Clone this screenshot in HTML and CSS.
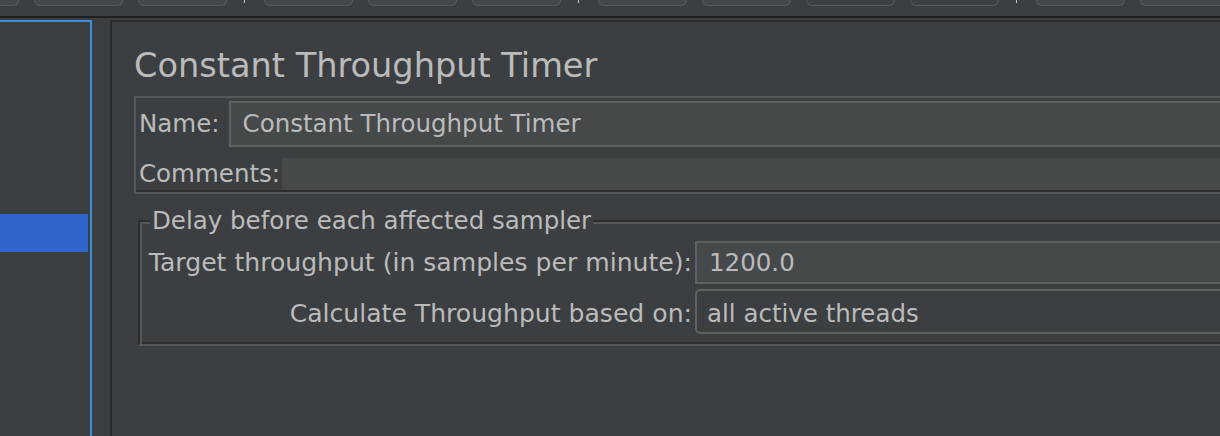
FILE: index.html
```html
<!DOCTYPE html>
<html>
<head>
<meta charset="utf-8">
<link rel="stylesheet" href="styles.css">
</head>
<body>
<div class="toolbar">
  <span class="tb-btn first"></span>
  <span class="tb-btn"></span>
  <span class="tb-btn"></span>
  <span class="tb-sep"></span>
  <span class="tb-btn"></span>
  <span class="tb-btn"></span>
  <span class="tb-btn"></span>
  <span class="tb-sep"></span>
  <span class="tb-btn"></span>
  <span class="tb-btn"></span>
  <span class="tb-btn dark"></span>
  <span class="tb-btn dark"></span>
  <span class="tb-sep"></span>
  <span class="tb-btn"></span>
  <span class="tb-btn"></span>
</div>
<div class="main">
  <div class="tree">
    <div class="tree-selected"></div>
  </div>
  <div class="content">
    <h1 class="title">Constant Throughput Timer</h1>
    <div class="etched name-panel">
      <div class="etched-inner">
        <div class="row name-row">
          <span class="label name-label">Name:</span>
          <div class="textfield name-field">Constant Throughput Timer</div>
        </div>
        <div class="row comments-row">
          <span class="label">Comments:</span>
          <div class="textarea"></div>
        </div>
      </div>
    </div>
    <fieldset class="group">
      <legend class="group-title">Delay before each affected sampler</legend>
      <div class="form-grid">
        <span class="label right">Target throughput (in samples per minute):</span>
        <div class="textfield value-field">1200.0</div>
        <span class="label right calc-label">Calculate Throughput based on:</span>
        <div class="combo">all active threads</div>
      </div>
    </fieldset>
  </div>
</div>
</body>
</html>
```

FILE: styles.css
```css
html, body {
  margin: 0;
  padding: 0;
}
body {
  width: 1220px;
  height: 436px;
  overflow: hidden;
  background: #3c3f41;
  color: #bbbbbb;
  font-family: "DejaVu Sans", "Liberation Sans", sans-serif;
  font-size: 24.5px;
}

/* toolbar */
.toolbar {
  height: 16px;
  border-bottom: 2px solid #1f2022;
  display: flex;
  align-items: flex-start;
  gap: 15px;
  overflow: hidden;
}
.tb-btn {
  flex: 0 0 89px;
  box-sizing: border-box;
  height: 6px;
  border: 1px solid #585b5e;
  border-top: none;
  border-radius: 0 0 6px 6px;
  background: #45484a;
}
.tb-btn.first { margin-left: -70px; }
.tb-btn.dark { background: #3d4043; }
.tb-sep {
  flex: 0 0 1px;
  height: 3px;
  margin: 0 4px 0 2px;
  background: #c8c8c8;
}

/* main split */
.main {
  display: flex;
  margin-top: 2px;
  height: 418px;
}
.tree {
  flex: 0 0 92px;
  box-sizing: border-box;
  border-top: 2px solid #3d8ed9;
  border-right: 2px solid #3d8ed9;
  padding-top: 192px;
  padding-right: 2px;
}
.tree-selected {
  height: 38px;
  background: #2f65ca;
}
.content {
  flex: 1;
  margin-left: 18px;
  border-top: 2px solid #2a2b2c;
  border-left: 2px solid #2a2b2c;
  padding: 24px 0 0 22px;
  overflow: hidden;
}
.title {
  margin: 0 0 10px 0;
  font-weight: normal;
  font-size: 33.6px;
  line-height: 40px;
  height: 40px;
  color: #bbbbbb;
  white-space: nowrap;
}

/* etched panel */
.etched {
  width: 1300px;
  border-top: 2px solid #55585a;
  border-left: 2px solid #55585a;
  border-bottom: 2px solid #55585a;
}
.etched-inner {
  border-bottom: 2px solid #2b2d2e;
  padding: 3px 0 0 3px;
}
.row {
  display: flex;
  align-items: center;
  white-space: nowrap;
}
.label {
  white-space: nowrap;
  line-height: 30px;
}
.name-row { height: 46px; }
.name-label { margin-right: 9px; }
.comments-row { height: 32px; margin-top: 11px; }
.textfield {
  flex: 1;
  box-sizing: border-box;
  background: #45494a;
  border: 2px solid #5e6162;
  padding-left: 12px;
  line-height: 40px;
}
.name-field { height: 46px; line-height: 42px; }
.textarea {
  flex: 1;
  height: 32px;
  margin-left: 2px;
  background: #45494a;
}

/* group */
.group {
  width: 1300px;
  margin: 14px 0 0 4px;
  padding: 0 0 10px 5px;
  border-style: solid;
  border-width: 2px;
  border-color: #2b2d2e #55585a #55585a #2b2d2e;
  box-shadow: inset 2px 2px 0 #55585a, inset -2px -2px 0 #2b2d2e;
  min-width: 0;
}
.group-title {
  padding: 0 2px 0 2px;
  margin-left: 5px;
  line-height: 26px;
  background: #3c3f41;
}
.form-grid {
  display: grid;
  grid-template-columns: 547px 1fr;
  column-gap: 3px;
  row-gap: 5px;
  align-items: center;
  margin-top: 7px;
}
.form-grid .label { font-size: 25.1px; }
.calc-label { padding-top: 4px; }
.right { text-align: right; }
.value-field {
  height: 43px;
  line-height: 39px;
}
.combo {
  box-sizing: border-box;
  height: 45px;
  border: 2px solid #5e6162;
  border-radius: 5px;
  background: #3c3f41;
  padding: 3px 0 0 10px;
  line-height: 40px;
}
```
